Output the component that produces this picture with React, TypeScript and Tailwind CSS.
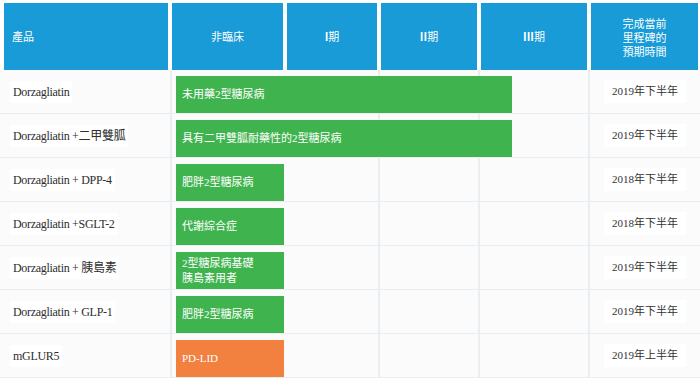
import React from 'react';

const serif = { fontFamily: '"Liberation Serif", "Noto Sans CJK TC", serif' };
const sans = { fontFamily: '"Noto Sans CJK TC", "Liberation Sans", sans-serif' };

interface Row {
  name: string;
  bar: string[];
  width: number;
  color: string;
  date: string;
}

const rows: Row[] = [
  { name: 'Dorzagliatin', bar: ['未用藥2型糖尿病'], width: 336, color: 'bg-[#3fb44e]', date: '2019年下半年' },
  { name: 'Dorzagliatin +二甲雙胍', bar: ['具有二甲雙胍耐藥性的2型糖尿病'], width: 336, color: 'bg-[#3fb44e]', date: '2019年下半年' },
  { name: 'Dorzagliatin + DPP-4', bar: ['肥胖2型糖尿病'], width: 108, color: 'bg-[#3fb44e]', date: '2018年下半年' },
  { name: 'Dorzagliatin +SGLT-2', bar: ['代謝綜合症'], width: 108, color: 'bg-[#3fb44e]', date: '2018年下半年' },
  { name: 'Dorzagliatin + 胰島素', bar: ['2型糖尿病基礎', '胰島素用者'], width: 108, color: 'bg-[#3fb44e]', date: '2019年下半年' },
  { name: 'Dorzagliatin + GLP-1', bar: ['肥胖2型糖尿病'], width: 108, color: 'bg-[#3fb44e]', date: '2019年下半年' },
  { name: 'mGLUR5', bar: ['PD-LID'], width: 108, color: 'bg-[#f2803f]', date: '2019年上半年' },
];

function Head({ w, children, left }: { w: string; children: React.ReactNode; left?: boolean }) {
  return (
    <div
      className={`${w} h-full bg-[#189bd7] text-white text-[11px] flex items-center ${left ? 'justify-start pl-[8px]' : 'justify-center text-center'}`}
      style={sans}
    >
      {children}
    </div>
  );
}

export default function App() {
  return (
    <div className="w-[700px] h-[381px] bg-white overflow-hidden">
      <div className="flex gap-[4px] pl-[4px] pt-[3px] h-[70px]">
        <Head w="w-[164px]" left>產品</Head>
        <Head w="w-[111px]">非臨床</Head>
        <Head w="w-[90px]"><b className="font-bold">I</b>期</Head>
        <Head w="w-[96px]"><b className="font-bold">II</b>期</Head>
        <Head w="w-[106px]"><b className="font-bold">III</b>期</Head>
        <Head w="w-[107px]">
          <span className="block leading-[14px]">完成當前<br />里程碑的<br />預期時間</span>
        </Head>
      </div>

      <div className="bg-[#fbfbfc]">
        {rows.map(r => (
          <div key={r.name} className="grid grid-cols-[170px_115px_93px_100px_110px_112px] h-[44px]">
            <div className="col-start-1 row-start-1 flex items-center pl-[10px] border-b border-[#e9eef3]">
              <span className="bg-white px-[3px] py-[2px] text-[12px] tracking-[-0.3px] text-[#2e2e2e]" style={serif}>{r.name}</span>
            </div>
            <div className="col-start-2 row-start-1 border-l-2 border-b border-[#e9eef3]" />
            <div className="col-start-3 row-start-1 border-b border-[#e9eef3]" />
            <div className="col-start-4 row-start-1 border-l-2 border-b border-[#e9eef3]" />
            <div className="col-start-5 row-start-1 border-l-2 border-b border-[#e9eef3]" />
            <div className="col-start-2 col-span-4 row-start-1 pl-[6px] pt-[6px] pb-[1px]">
              <div
                className={`${r.color} h-full flex flex-col justify-center pl-[6px] text-white text-[11px] leading-[15px]`}
                style={{ ...serif, width: r.width }}
              >
                {r.bar.map(t => <div key={t}>{t}</div>)}
              </div>
            </div>
            <div className="col-start-6 row-start-1 border-l-2 border-b border-[#e9eef3] flex items-center justify-center">
              <span className="bg-white px-[8px] py-[3px] text-[11px] text-[#333]" style={serif}>{r.date}</span>
            </div>
          </div>
        ))}
      </div>
    </div>
  );
}
